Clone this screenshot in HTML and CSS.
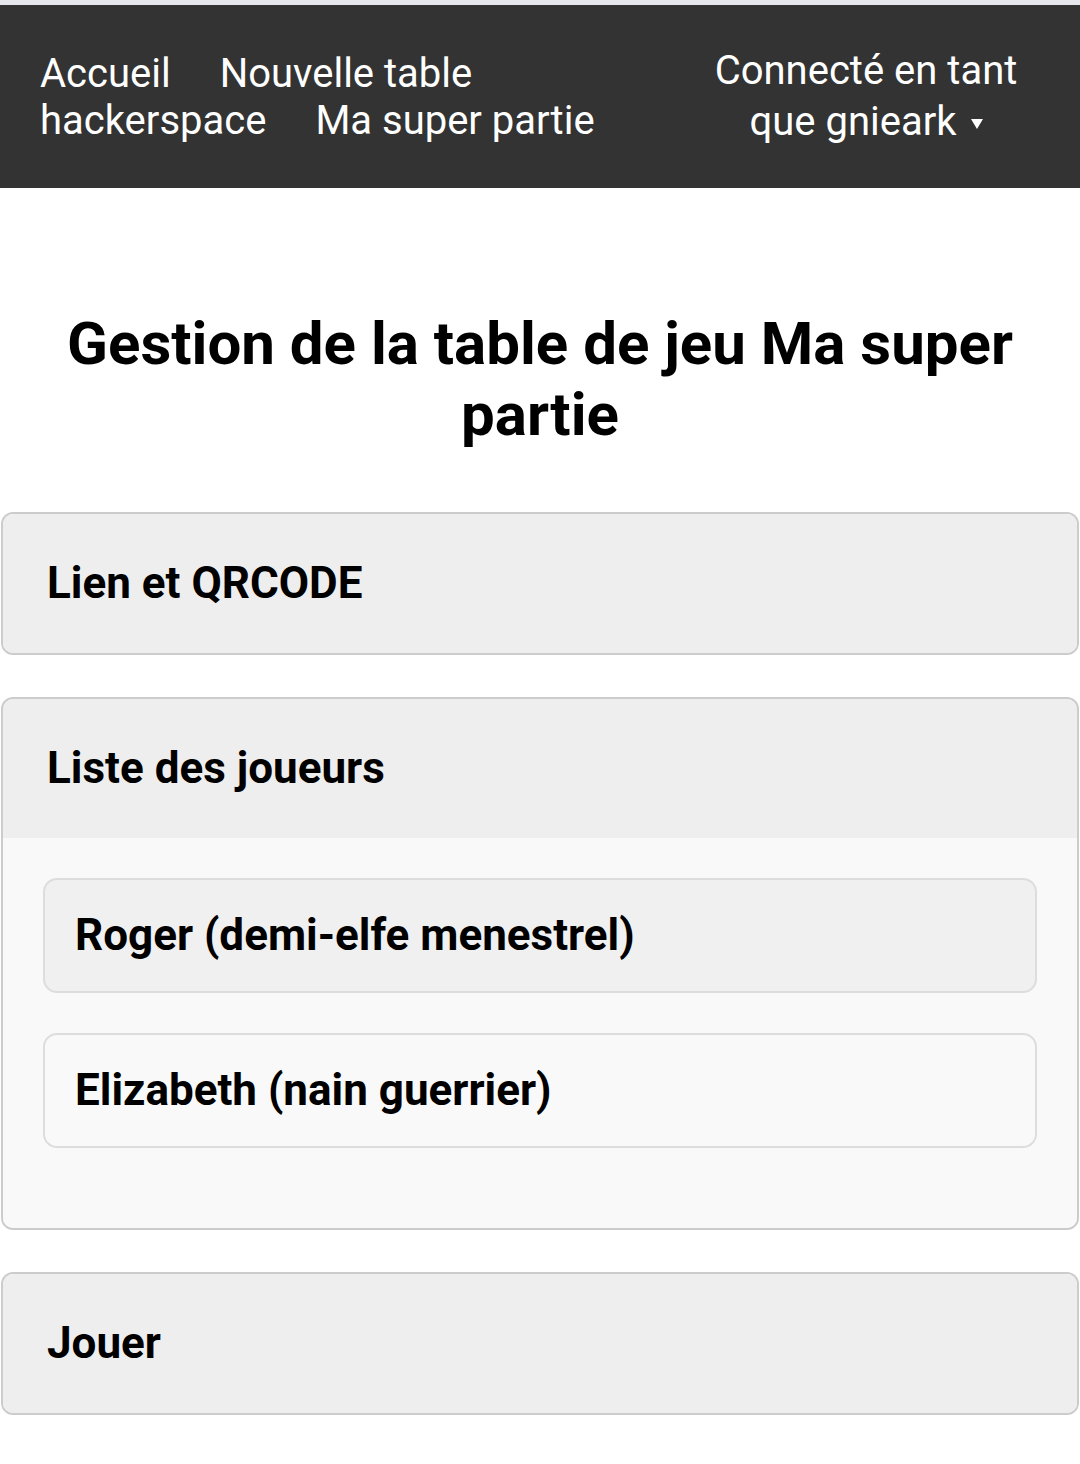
FILE: index.html
```html
<!DOCTYPE html>
<html lang="fr">
<head>
<meta charset="utf-8">
<title>Gestion de la table de jeu Ma super partie</title>
<link rel="stylesheet" href="styles.css">
</head>
<body>
<div class="topstrip"></div>
<header class="navbar">
  <nav class="links">
    <div class="links-row"><a href="#">Accueil</a><a href="#">Nouvelle table</a></div>
    <div class="links-row"><a href="#">hackerspace</a><a href="#">Ma super partie</a></div>
  </nav>
  <div class="user">Connecté en tant<br>que gnieark<span class="caret"></span></div>
</header>
<main class="content">
  <h1 class="title">Gestion de la table de jeu Ma super partie</h1>
  <section class="card">
    <h2 class="card-head">Lien et QRCODE</h2>
  </section>
  <section class="card">
    <h2 class="card-head">Liste des joueurs</h2>
    <div class="card-body">
      <div class="player player-alt">Roger (demi-elfe menestrel)</div>
      <div class="player">Elizabeth (nain guerrier)</div>
    </div>
  </section>
  <section class="card">
    <h2 class="card-head">Jouer</h2>
  </section>
</main>
</body>
</html>
```
FILE: styles.css
```css
html, body {
  margin: 0;
  padding: 0;
  background: #ffffff;
  font-family: Roboto, "Liberation Sans", sans-serif;
  color: #000;
}

.topstrip {
  height: 5px;
  background: #e6e7ec;
}

.navbar {
  height: 183px;
  background: #333333;
  display: flex;
  align-items: center;
  justify-content: space-between;
  padding: 0 54px 0 40px;
  box-sizing: border-box;
}

.links {
  display: flex;
  flex-direction: column;
}

.links-row {
  display: flex;
  gap: 49px;
}

.links a {
  color: #ffffff;
  text-decoration: none;
  font-size: 40px;
  line-height: 47px;
}

.user {
  color: #ffffff;
  font-size: 40px;
  line-height: 51px;
  text-align: center;
  width: 320px;
  margin-top: -2px;
}

.caret {
  display: inline-block;
  width: 0;
  height: 0;
  margin-left: 14px;
  border-left: 6px solid transparent;
  border-right: 6px solid transparent;
  border-top: 10px solid #ffffff;
  vertical-align: 6px;
}

.content {
  padding: 0 1px 40px;
}

.title {
  margin: 120px 30px 62px;
  text-align: center;
  font-size: 60px;
  line-height: 71px;
  font-weight: 700;
}

.card {
  border: 2px solid #cccccc;
  border-radius: 12px;
  overflow: hidden;
  background: #eeeeee;
  margin-bottom: 42px;
}

.card-head {
  margin: 0;
  padding: 43px 44px;
  font-size: 44px;
  line-height: 53px;
  font-weight: 700;
  background: #eeeeee;
}

.card-body {
  background: #f9f9f9;
  padding: 40px 40px 80px;
  display: flex;
  flex-direction: column;
  gap: 40px;
}

.player {
  border: 2px solid #dddddd;
  border-radius: 14px;
  padding: 29px 30px;
  font-size: 44px;
  line-height: 53px;
  font-weight: 700;
  background: #f9f9f9;
}

.player-alt {
  background: #f0f0f0;
}
```
